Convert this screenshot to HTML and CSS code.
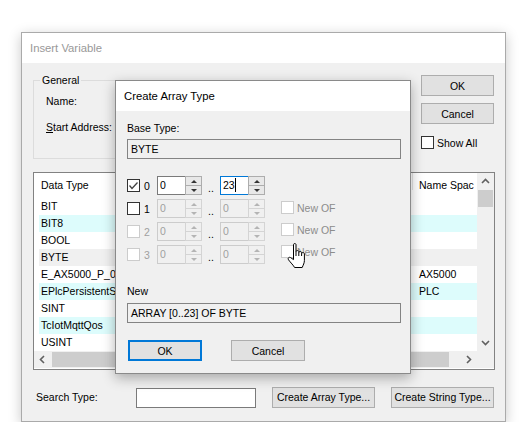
FILE: index.html
```html
<!DOCTYPE html>
<html lang="en">
<head>
    <meta charset="UTF-8">
    <title>Insert Variable</title>
    <link rel="stylesheet" href="styles.css">
</head>
<body>
    <div class="window insert-var">
        <div class="titlebar inactive">Insert Variable</div>
        <div class="window-body">
            <div class="top-row">
                <fieldset class="group">
                    <legend>General</legend>
                    <div class="field-label">Name:</div>
                    <div class="field-label second"><u>S</u>tart Address:</div>
                </fieldset>
                <div class="side">
                    <button class="btn">OK</button>
                    <button class="btn">Cancel</button>
                    <div class="check-line"><span class="cb"></span><span class="check-text">Show All</span></div>
                </div>
            </div>

            <div class="listbox">
                <div class="list-main">
                    <div class="list-view">
                        <div class="list-header"><span class="col-type">Data Type</span><span class="col-ns">Name Spac</span></div>
                        <div class="row"><span class="col-type">BIT</span><span class="col-ns"></span></div>
                        <div class="row alt"><span class="col-type">BIT8</span><span class="col-ns"></span></div>
                        <div class="row"><span class="col-type">BOOL</span><span class="col-ns"></span></div>
                        <div class="row sel"><span class="col-type">BYTE</span><span class="col-ns"></span></div>
                        <div class="row"><span class="col-type">E_AX5000_P_0150</span><span class="col-ns">AX5000</span></div>
                        <div class="row alt"><span class="col-type">EPlcPersistentSta</span><span class="col-ns">PLC</span></div>
                        <div class="row"><span class="col-type">SINT</span><span class="col-ns"></span></div>
                        <div class="row alt"><span class="col-type">TcIotMqttQos</span><span class="col-ns"></span></div>
                        <div class="row"><span class="col-type">USINT</span><span class="col-ns"></span></div>
                    </div>
                    <div class="vscroll">
                        <div class="arrow"><svg width="17" height="17"><polyline points="5,10 8.5,6.5 12,10" /></svg></div>
                        <div class="vthumb"></div>
                        <div class="track"></div>
                        <div class="arrow"><svg width="17" height="17"><polyline points="5,7 8.5,10.5 12,7" /></svg></div>
                    </div>
                </div>
                <div class="hscroll-row">
                    <div class="hscroll">
                        <div class="arrow"><svg width="17" height="17"><polyline points="10,5 6.5,8.5 10,12" /></svg></div>
                        <div class="hthumb"></div>
                        <div class="track"></div>
                        <div class="arrow"><svg width="17" height="17"><polyline points="7,5 10.5,8.5 7,12" /></svg></div>
                    </div>
                    <div class="corner"></div>
                </div>
            </div>

            <div class="bottom-row">
                <span class="search-label">Search Type:</span>
                <input class="search" type="text">
                <button class="btn wide">Create Array Type...</button>
                <button class="btn wide">Create String Type...</button>
            </div>

            <div class="window array-dlg">
                <div class="titlebar">Create Array Type</div>
                <div class="dlg-body">
                    <div class="plain-label">Base Type:</div>
                    <div class="readonly-field">BYTE</div>

                    <div class="dims">
                        <div class="dim">
                            <span class="cb"><svg width="11" height="11"><polyline points="1.5,5.5 4,8.5 9.5,2.5" /></svg></span>
                            <span class="dim-no">0</span>
                            <div class="spin"><span class="spin-text">0</span><span class="spin-btns"><span class="up"></span><span class="down"></span></span></div>
                            <span class="dots">..</span>
                            <div class="spin focus"><span class="spin-text">23<i class="caret"></i></span><span class="spin-btns"><span class="up"></span><span class="down"></span></span></div>
                        </div>
                        <div class="dim">
                            <span class="cb"></span>
                            <span class="dim-no">1</span>
                            <div class="spin off"><span class="spin-text">0</span><span class="spin-btns"><span class="up"></span><span class="down"></span></span></div>
                            <span class="dots">..</span>
                            <div class="spin off"><span class="spin-text">0</span><span class="spin-btns"><span class="up"></span><span class="down"></span></span></div>
                            <span class="newof"><span class="cb disabled"></span>New OF</span>
                        </div>
                        <div class="dim">
                            <span class="cb disabled"></span>
                            <span class="dim-no grey">2</span>
                            <div class="spin off"><span class="spin-text">0</span><span class="spin-btns"><span class="up"></span><span class="down"></span></span></div>
                            <span class="dots">..</span>
                            <div class="spin off"><span class="spin-text">0</span><span class="spin-btns"><span class="up"></span><span class="down"></span></span></div>
                            <span class="newof"><span class="cb disabled"></span>New OF</span>
                        </div>
                        <div class="dim">
                            <span class="cb disabled"></span>
                            <span class="dim-no grey">3</span>
                            <div class="spin off"><span class="spin-text">0</span><span class="spin-btns"><span class="up"></span><span class="down"></span></span></div>
                            <span class="dots">..</span>
                            <div class="spin off"><span class="spin-text">0</span><span class="spin-btns"><span class="up"></span><span class="down"></span></span></div>
                            <span class="newof"><span class="cb disabled"></span>New OF</span>
                        </div>
                    </div>

                    <div class="plain-label new-label">New</div>
                    <div class="readonly-field result">ARRAY [0..23] OF BYTE</div>

                    <div class="dlg-buttons">
                        <button class="btn default">OK</button>
                        <button class="btn">Cancel</button>
                    </div>
                </div>
            </div>
        </div>
    </div>

    <svg class="cursor" width="19" height="26" viewBox="0 0 19 26">
        <path d="M6.5,1.5 C6.5,0.3 9,0.3 9,1.5 L9,8.5 C9,7.3 11.8,7.3 11.8,8.5 L11.8,9.5 C11.8,8.3 14.6,8.3 14.6,9.5 L14.6,10.5 C14.6,9.3 17.4,9.3 17.4,10.8 L17.4,17.5 C17.4,20 16.2,22 15.2,24.5 L7.6,24.5 C6.6,22.5 3.5,19.5 1.5,16.8 C0.4,15.2 2,13.6 3.6,14.6 L6.5,16.6 Z" />
        <path class="knuckle" d="M9,8.5 L9,13 M11.8,9.5 L11.8,13 M14.6,10.5 L14.6,13" />
    </svg>
</body>
</html>
```

FILE: styles.css
```css
body {
    margin: 0;
    background: #fff;
    font-family: "Liberation Sans", Arial, sans-serif;
    font-size: 10.5px;
    color: #000;
}

.window {
    box-sizing: border-box;
    border: 1px solid #aaaaaa;
    background: #f0f0f0;
    display: flex;
    flex-direction: column;
}

.insert-var {
    width: 485px;
    height: 390px;
    margin: 32px 0 0 21px;
    box-shadow: 0 3px 12px rgba(0, 0, 0, 0.22);
}

.titlebar {
    flex: none;
    height: 30px;
    line-height: 30px;
    padding-left: 8px;
    background: #fff;
    font-size: 11.3px;
}

.titlebar.inactive {
    color: #999;
}

.window-body {
    position: relative;
    flex: 1;
    padding: 11px 10px 0 11px;
}

/* top part */
.top-row {
    display: flex;
    align-items: flex-start;
    gap: 13px;
}

.group {
    flex: 1;
    min-width: 0;
    height: 85px;
    box-sizing: border-box;
    margin: 0;
    padding: 0 0 0 12px;
    border: 1px solid #dcdcdc;
}

.group legend {
    padding: 0 2px;
    margin-left: -6px;
    line-height: 13px;
}

.field-label {
    line-height: 13px;
    margin-top: 8px;
}

.field-label.second {
    margin-top: 13px;
}

.side {
    width: 73px;
    margin: 1px 1px 0 0;
    display: flex;
    flex-direction: column;
    gap: 7px;
}

.btn {
    box-sizing: border-box;
    height: 21px;
    padding: 0;
    background: #e1e1e1;
    border: 1px solid #adadad;
    font: inherit;
    color: #000;
}

.side .btn {
    width: 73px;
}

.check-line {
    display: flex;
    align-items: center;
    margin-top: 5px;
}

.check-text {
    margin-left: 3px;
}

.cb {
    flex: none;
    width: 13px;
    height: 13px;
    box-sizing: border-box;
    border: 1px solid #333;
    background: #fff;
    display: flex;
}

.cb svg polyline {
    fill: none;
    stroke: #444;
    stroke-width: 1.3;
}

.cb.disabled {
    border-color: #cccccc;
}

/* list */
.listbox {
    margin-top: 13px;
    height: 198px;
    box-sizing: border-box;
    border: 1px solid #828282;
    background: #fff;
}

.list-main {
    display: flex;
    height: 178px;
}

.list-view {
    flex: 1;
    overflow: hidden;
}

.list-header,
.row {
    display: flex;
    margin-left: 5px;
    white-space: nowrap;
}

.list-header {
    height: 25px;
    line-height: 25px;
}

.row {
    height: 17px;
    line-height: 17px;
}

.row.alt {
    background: #ddfcfc;
}

.row.sel {
    background: #f0f0f0;
}

.col-type {
    flex: none;
    width: 373px;
    padding-left: 2px;
    box-sizing: border-box;
    overflow: hidden;
}

.col-ns {
    flex: 1;
    padding-left: 7px;
    overflow: hidden;
}

.list-header .col-ns {
    padding-left: 6px;
    border-left: 1px solid #e5e5e5;
    height: 17px;
    line-height: 25px;
    overflow: visible;
}

.vscroll {
    width: 17px;
    background: #f0f0f0;
    display: flex;
    flex-direction: column;
}

.arrow {
    flex: none;
    width: 17px;
    height: 17px;
}

.arrow polyline {
    fill: none;
    stroke: #606060;
    stroke-width: 1.6;
}

.track {
    flex: 1;
}

.vthumb {
    height: 17px;
    margin: 0 1px;
    background: #cdcdcd;
}

.hscroll-row {
    display: flex;
    height: 17px;
}

.hscroll {
    flex: 1;
    display: flex;
    background: #f0f0f0;
}

.hthumb {
    width: 397px;
    margin: 1px 0 1px 1px;
    background: #cdcdcd;
}

.corner {
    width: 17px;
    background: #f0f0f0;
}

/* bottom */
.bottom-row {
    display: flex;
    align-items: center;
    margin-top: 16px;
}

.search-label {
    width: 103px;
    padding-left: 3px;
    box-sizing: border-box;
}

.search {
    width: 120px;
    height: 20px;
    box-sizing: border-box;
    margin: 2px 0 0 0;
    border: 1px solid #7a7a7a;
    background: #fff;
}

.btn.wide {
    width: 103px;
    margin-left: 16px;
}

/* create array dialog */
.array-dlg {
    position: absolute;
    left: 93px;
    top: 17px;
    width: 296px;
    height: 294px;
    border-color: #8a8a8a;
    box-shadow: 0 4px 12px rgba(0, 0, 0, 0.3);
}

.dlg-body {
    padding: 11px 9px 0 11px;
}

.plain-label {
    line-height: 13px;
}

.readonly-field {
    margin-top: 4px;
    height: 20px;
    box-sizing: border-box;
    padding-left: 3px;
    line-height: 18px;
    border: 1px solid #838383;
    background: #f0f0f0;
}

.dims {
    margin-top: 17px;
    display: flex;
    flex-direction: column;
    gap: 4px;
}

.dim {
    display: flex;
    align-items: center;
    height: 19px;
}

.dim-no {
    width: 13px;
    margin-left: 4px;
}

.dim-no.grey {
    color: #a0a0a0;
}

.spin {
    display: flex;
    width: 45px;
    height: 19px;
}

.spin-text {
    flex: 1;
    padding-left: 2px;
    line-height: 17px;
    border: 1px solid #7a7a7a;
    border-right: 0;
    background: #fff;
}

.spin-btns {
    width: 17px;
    box-sizing: border-box;
    border: 1px solid #adadad;
    display: flex;
    flex-direction: column;
}

.spin-btns span {
    flex: 1;
    display: flex;
    align-items: center;
    justify-content: center;
    background: #e8e8e8;
}

.spin-btns span + span {
    border-top: 1px solid #adadad;
}

.up::after,
.down::after {
    content: "";
    border-left: 3px solid transparent;
    border-right: 3px solid transparent;
}

.up::after {
    border-bottom: 3px solid #333;
}

.down::after {
    border-top: 3px solid #333;
}

.spin.focus .spin-text {
    border-color: #0078d7;
}

.caret {
    display: inline-block;
    width: 1px;
    height: 14px;
    background: #000;
    vertical-align: -3px;
}

.spin.off .spin-text {
    background: #f0f0f0;
    border-color: #cccccc;
    color: #a0a0a0;
}

.spin.off .spin-btns {
    border-color: #d4d4d4;
}

.spin.off .spin-btns span {
    background: #f0f0f0;
}

.spin.off .spin-btns span + span {
    border-top-color: #d4d4d4;
}

.spin.off .up::after {
    border-bottom-color: #b4b4b4;
}

.spin.off .down::after {
    border-top-color: #b4b4b4;
}

.dots {
    width: 18px;
    text-align: center;
    align-self: flex-end;
    line-height: 13px;
}

/* the "New OF" column sits a little tighter than the dimension rows */
.newof {
    display: flex;
    align-items: center;
    gap: 3px;
    margin-left: 16px;
    margin-top: -2px;
    color: #8c8c8c;
}

.dim:nth-child(3) .newof {
    margin-top: -4px;
}

.dim:nth-child(4) .newof {
    margin-top: -6px;
}

.new-label {
    margin-top: 21px;
}

.readonly-field.result {
    margin-top: 5px;
}

.dlg-buttons {
    display: flex;
    margin-top: 17px;
    padding-left: 1px;
    gap: 29px;
}

.dlg-buttons .btn {
    width: 74px;
}

.btn.default {
    border: 2px solid #0078d7;
}

.cursor {
    position: absolute;
    left: 287px;
    top: 243px;
}

.cursor path {
    fill: #fff;
    stroke: #000;
    stroke-width: 1;
}

.cursor .knuckle {
    fill: none;
}
```
